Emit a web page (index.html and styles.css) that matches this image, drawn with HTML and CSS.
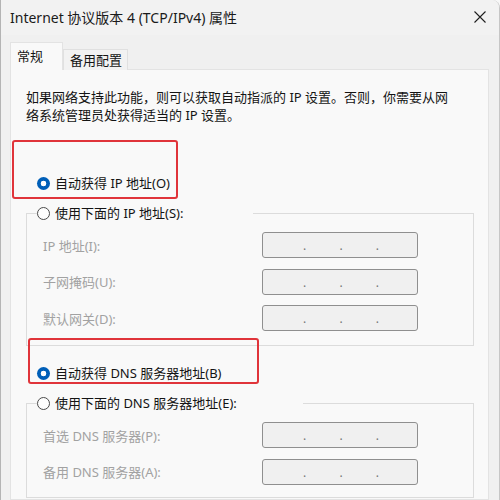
FILE: index.html
```html
<!DOCTYPE html>
<html lang="zh-CN">
<head>
<meta charset="utf-8">
<title>Internet 协议版本 4 (TCP/IPv4) 属性</title>
<link rel="stylesheet" href="styles.css">
</head>
<body>
<div class="window">
  <div class="titlebar">
    <span class="title">Internet 协议版本 4 (TCP/IPv4) 属性</span>
    <svg class="close" width="12" height="12" viewBox="0 0 12 12"><path d="M0.5 0.5 L11.5 11.5 M11.5 0.5 L0.5 11.5" stroke="#1f1f1f" stroke-width="1.1" fill="none"/></svg>
  </div>
  <div class="body">
    <div class="tabs">
      <div class="tab active">常规</div>
      <div class="tab">备用配置</div>
    </div>
    <div class="panel">
      <p class="desc">如果网络支持此功能，则可以获取自动指派的 IP 设置。否则，你需要从网<br>络系统管理员处获得适当的 IP 设置。</p>

      <div class="radio-row first">
        <span class="radio checked"></span><span>自动获得 IP 地址(O)</span>
      </div>

      <fieldset class="group">
        <legend class="legend ip-legend"><span class="radio"></span><span>使用下面的 IP 地址(S):</span></legend>
        <div class="grid">
          <span class="label">IP 地址(I):</span>
          <div class="ip"><span>.</span><span>.</span><span>.</span></div>
          <span class="label">子网掩码(U):</span>
          <div class="ip"><span>.</span><span>.</span><span>.</span></div>
          <span class="label">默认网关(D):</span>
          <div class="ip"><span>.</span><span>.</span><span>.</span></div>
        </div>
      </fieldset>

      <div class="radio-row second">
        <span class="radio checked"></span><span>自动获得 DNS 服务器地址(B)</span>
      </div>

      <fieldset class="group last">
        <legend class="legend dns-legend"><span class="radio"></span><span>使用下面的 DNS 服务器地址(E):</span></legend>
        <div class="grid">
          <span class="label">首选 DNS 服务器(P):</span>
          <div class="ip"><span>.</span><span>.</span><span>.</span></div>
          <span class="label">备用 DNS 服务器(A):</span>
          <div class="ip"><span>.</span><span>.</span><span>.</span></div>
        </div>
      </fieldset>

      <div class="mark mark-ip"></div>
      <div class="mark mark-dns"></div>
    </div>
  </div>
</div>
</body>
</html>
```

FILE: styles.css
```css
* { box-sizing: border-box; }

html, body {
  margin: 0;
  padding: 0;
  background: #f7f7f7;
}

body {
  font-family: "Noto Sans", "Noto Sans CJK SC", sans-serif;
  font-size: 13px;
  color: #141414;
}

.window {
  width: 500px;
  height: 500px;
  overflow: hidden;
  background: #f0f0f0;
  border-left: 1px solid #b4b4b4;
  border-right: 1px solid #c6c6c6;
  border-top-right-radius: 8px;
  display: flex;
  flex-direction: column;
}

.titlebar {
  height: 35px;
  flex: none;
  display: flex;
  align-items: center;
  justify-content: space-between;
  padding: 0 13px 2px 9px;
  background: #f2f2f2;
}

.title {
  font-size: 14px;
  color: #1a1a1a;
  white-space: nowrap;
}

.close { display: block; }

.body {
  flex: 1;
  padding: 7px 10px 0 9px;
  display: flex;
  flex-direction: column;
}

.tabs {
  display: flex;
  align-items: flex-end;
  margin-bottom: -1px;
  position: relative;
  z-index: 1;
}

.tab {
  height: 21px;
  line-height: 20px;
  padding: 0 5px 0 6px;
  background: #f2f2f2;
  border: 1px solid #e0e0e0;
  border-bottom: none;
  white-space: nowrap;
}

.tab.active {
  height: 28px;
  line-height: 26px;
  padding: 0 19px 0 6px;
  background: #f9f9f9;
  border-color: #e3e3e3;
}

.panel {
  position: relative;
  flex: 1;
  background: #f9f9f9;
  border: 1px solid #e3e3e3;
  padding: 18px 14px 0 15px;
}

.desc {
  margin: 0;
  line-height: 18px;
  white-space: nowrap;
}

.radio-row,
.legend {
  display: flex;
  align-items: center;
  gap: 5px;
  height: 18px;
  line-height: 18px;
  white-space: nowrap;
}

.radio-row { padding-left: 11px; }
.radio-row.first { margin-top: 50px; }
.radio-row.second { margin-top: 18px; }

.radio {
  width: 13px;
  height: 13px;
  flex: none;
  border-radius: 50%;
  border: 1px solid #4a4a4a;
  background: #fdfdfd;
}

.radio.checked {
  border: none;
  background: radial-gradient(circle, #ffffff 0 2.6px, #005fb8 3.1px);
}

.group {
  margin: 12px 0 0 0;
  padding: 10px 0 14px 10px;
  border: 1px solid #dcdcdc;
  min-width: 0;
}

.group.last { padding-bottom: 12px; }

.legend { padding: 0; }
.ip-legend { width: 216px; }
.dns-legend { width: 266px; }

.grid {
  display: grid;
  grid-template-columns: 219px 156px;
  row-gap: 10.5px;
  align-items: center;
  padding-left: 6px;
}

.label {
  color: #a2a2a2;
  white-space: nowrap;
}

.ip {
  height: 26px;
  border: 1px solid #8f8f8f;
  border-radius: 3px;
  background: #f0f0f0;
  display: flex;
  justify-content: space-between;
  align-items: center;
  padding: 2px 38px 0 40px;
  color: #777777;
  font-size: 12px;
  line-height: 12px;
}

.mark {
  position: absolute;
  border: 2px solid #e0343a;
  border-radius: 3px;
  pointer-events: none;
}

.mark-ip {
  left: 1px;
  top: 70px;
  width: 166px;
  height: 59px;
}

.mark-dns {
  left: 17px;
  top: 268px;
  width: 231px;
  height: 46px;
}
```
